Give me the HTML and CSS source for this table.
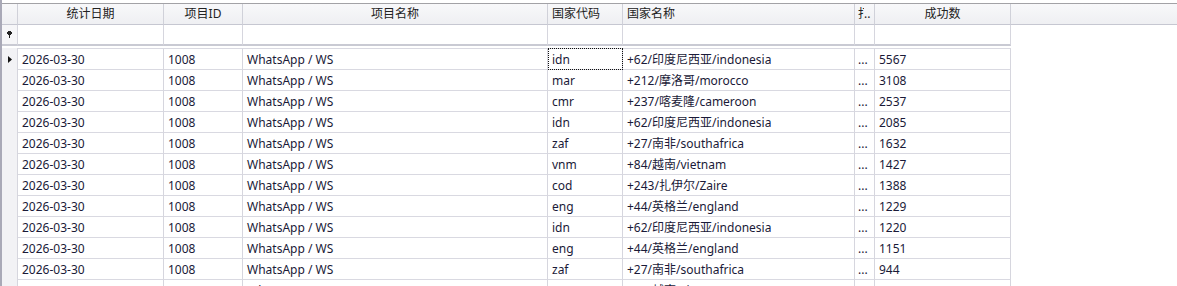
FILE: index.html
```html
<!DOCTYPE html>
<html lang="zh">
<head>
<meta charset="utf-8">
<link rel="stylesheet" href="styles.css">
</head>
<body>
<div class="grid">
  <div class="row hdr">
    <div class="c ind"></div>
    <div class="c center">统计日期</div>
    <div class="c center">项目ID</div>
    <div class="c center">项目名称</div>
    <div class="c">国家代码</div>
    <div class="c">国家名称</div>
    <div class="c tight"><span class="clip">打</span><span class="dots">..</span></div>
    <div class="c center">成功数</div>
    <div class="c fill"></div>
  </div>
  <div class="row flt">
    <div class="c ind"><svg width="5" height="7" viewBox="0 0 5 7"><path d="M1 0h3v1h1v2H4v1H3v3H2V4H1V3H0V1h1z" fill="#222"/></svg></div>
    <div class="c"></div><div class="c"></div><div class="c"></div><div class="c"></div><div class="c"></div><div class="c"></div><div class="c"></div>
    <div class="c fill"></div>
  </div>
  <div class="gap"></div>
  <div class="body">
    <div class="row dat first">
      <div class="c ind"><svg width="4" height="7" viewBox="0 0 4 7"><path d="M0 0L4 3.5L0 7z" fill="#111"/></svg></div>
      <div class="c">2026-03-30</div><div class="c">1008</div><div class="c">WhatsApp / WS</div>
      <div class="c focus">idn</div><div class="c">+62/印度尼西亚/indonesia</div><div class="c tight">...</div><div class="c">5567</div><div class="c fill"></div>
    </div>
    <div class="row dat">
      <div class="c ind"></div>
      <div class="c">2026-03-30</div><div class="c">1008</div><div class="c">WhatsApp / WS</div>
      <div class="c">mar</div><div class="c">+212/摩洛哥/morocco</div><div class="c tight">...</div><div class="c">3108</div><div class="c fill"></div>
    </div>
    <div class="row dat">
      <div class="c ind"></div>
      <div class="c">2026-03-30</div><div class="c">1008</div><div class="c">WhatsApp / WS</div>
      <div class="c">cmr</div><div class="c">+237/喀麦隆/cameroon</div><div class="c tight">...</div><div class="c">2537</div><div class="c fill"></div>
    </div>
    <div class="row dat">
      <div class="c ind"></div>
      <div class="c">2026-03-30</div><div class="c">1008</div><div class="c">WhatsApp / WS</div>
      <div class="c">idn</div><div class="c">+62/印度尼西亚/indonesia</div><div class="c tight">...</div><div class="c">2085</div><div class="c fill"></div>
    </div>
    <div class="row dat">
      <div class="c ind"></div>
      <div class="c">2026-03-30</div><div class="c">1008</div><div class="c">WhatsApp / WS</div>
      <div class="c">zaf</div><div class="c">+27/南非/southafrica</div><div class="c tight">...</div><div class="c">1632</div><div class="c fill"></div>
    </div>
    <div class="row dat">
      <div class="c ind"></div>
      <div class="c">2026-03-30</div><div class="c">1008</div><div class="c">WhatsApp / WS</div>
      <div class="c">vnm</div><div class="c">+84/越南/vietnam</div><div class="c tight">...</div><div class="c">1427</div><div class="c fill"></div>
    </div>
    <div class="row dat">
      <div class="c ind"></div>
      <div class="c">2026-03-30</div><div class="c">1008</div><div class="c">WhatsApp / WS</div>
      <div class="c">cod</div><div class="c">+243/扎伊尔/Zaire</div><div class="c tight">...</div><div class="c">1388</div><div class="c fill"></div>
    </div>
    <div class="row dat">
      <div class="c ind"></div>
      <div class="c">2026-03-30</div><div class="c">1008</div><div class="c">WhatsApp / WS</div>
      <div class="c">eng</div><div class="c">+44/英格兰/england</div><div class="c tight">...</div><div class="c">1229</div><div class="c fill"></div>
    </div>
    <div class="row dat">
      <div class="c ind"></div>
      <div class="c">2026-03-30</div><div class="c">1008</div><div class="c">WhatsApp / WS</div>
      <div class="c">idn</div><div class="c">+62/印度尼西亚/indonesia</div><div class="c tight">...</div><div class="c">1220</div><div class="c fill"></div>
    </div>
    <div class="row dat">
      <div class="c ind"></div>
      <div class="c">2026-03-30</div><div class="c">1008</div><div class="c">WhatsApp / WS</div>
      <div class="c">eng</div><div class="c">+44/英格兰/england</div><div class="c tight">...</div><div class="c">1151</div><div class="c fill"></div>
    </div>
    <div class="row dat">
      <div class="c ind"></div>
      <div class="c">2026-03-30</div><div class="c">1008</div><div class="c">WhatsApp / WS</div>
      <div class="c">zaf</div><div class="c">+27/南非/southafrica</div><div class="c tight">...</div><div class="c">944</div><div class="c fill"></div>
    </div>
    <div class="row dat">
      <div class="c ind"></div>
      <div class="c">2026-03-30</div><div class="c">1008</div><div class="c">WhatsApp / WS</div>
      <div class="c">vnm</div><div class="c">+84/越南/vietnam</div><div class="c tight">...</div><div class="c">902</div><div class="c fill"></div>
    </div>
  </div>
</div>
</body>
</html>
```

FILE: styles.css
```css
* { box-sizing: border-box; }
html, body { margin: 0; padding: 0; background: #fff; }
body {
  width: 1177px;
  height: 286px;
  overflow: hidden;
  font-family: "Noto Sans", "Noto Sans CJK SC", sans-serif;
  font-size: 12px;
  color: #1a1a38;
}
.grid {
  height: 286px;
  border-left: 2px solid #a9a9b7;
  padding-top: 3px;
  display: flex;
  flex-direction: column;
  overflow: hidden;
}
.row {
  display: grid;
  grid-template-columns: 16px 146px 79px 305px 75px 232px 20px 136px 1fr;
}
.c {
  border-right: 1px solid #d6d6de;
  padding: 0 4px;
  white-space: nowrap;
  overflow: hidden;
  display: flex;
  align-items: center;
  line-height: 16px;
}
.c.center { justify-content: center; }
.c.tight { padding: 0 0 0 3px; }
.c.fill { border-right: none; }

.clip {
  display: inline-block;
  width: 6px;
  overflow: hidden;
  flex: none;
}
.dots { flex: none; }

.hdr {
  border-top: 1px solid #a2a2a6;
  background: linear-gradient(#f8f8fa, #eeeff2);
  color: #222;
}
.hdr .c {
  height: 21px;
  border-bottom: 1px solid #c6c7d1;
  border-right-color: #d0d1d9;
}

.flt .c {
  height: 21px;
  border-bottom: 2px solid #c9cad3;
  background: #fff;
}
.flt .c.ind {
  background: #f6f6f8;
  justify-content: center;
  padding: 0;
}
.flt .c.fill { border-bottom: none; }

.gap { height: 2px; flex: none; }

.body { flex: 1; overflow: hidden; }
.dat .c {
  height: 21px;
  border-bottom: 1px solid #d9d9e1;
  padding-top: 1px;
}
.dat.first .c { border-top: 1px solid #d9d9e1; height: 22px; }
.dat .c.ind {
  background: #f2f2f5;
  border-bottom: none;
  border-top: none;
  justify-content: center;
  padding: 0;
}
.dat .c.fill { border: none; }
.dat .c.focus {
  outline: 1px dotted #111;
  outline-offset: -1px;
}
```
